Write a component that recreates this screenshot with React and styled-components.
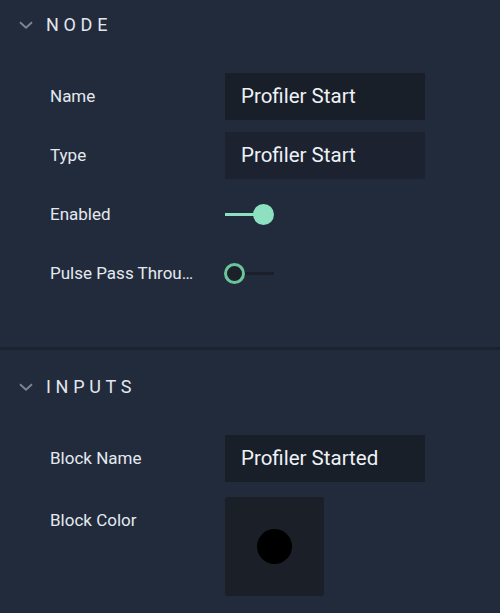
import styled, { createGlobalStyle } from 'styled-components';

const GlobalStyle = createGlobalStyle`
  html, body {
    margin: 0;
    padding: 0;
    background: #222b3b;
    font-family: Roboto, "Liberation Sans", sans-serif;
  }
`;

const Panel = styled.div`
  width: 500px;
  height: 613px;
  background: #222b3b;
  overflow: hidden;
`;

const Section = styled.section`
  padding: ${props => props.first ? '12px' : '24px'} 0 ${props => props.first ? '50px' : '0'};
  border-bottom: ${props => props.first ? '3px solid #1b2230' : 'none'};
`;

const Header = styled.div`
  display: flex;
  align-items: center;
  height: 24px;
  padding-left: 19px;
  margin-bottom: 37px;
`;

const Chevron = styled.svg`
  width: 14px;
  height: 8px;
  margin-right: 13px;
  margin-top: 2px;
`;

const Title = styled.span`
  font-size: 18px;
  letter-spacing: 4.7px;
  color: #e1e7ef;
  text-transform: uppercase;
`;

const Rows = styled.div`
  display: flex;
  flex-direction: column;
  gap: ${props => props.gap || 12}px;
  padding-left: 50px;
`;

const Row = styled.div`
  display: flex;
  align-items: flex-start;
`;

const Label = styled.div`
  width: 150px;
  margin-right: 25px;
  height: 47px;
  line-height: 47px;
  font-size: 17px;
  color: #e4e9f0;
  white-space: nowrap;
  overflow: hidden;
  text-overflow: ellipsis;
`;

const Field = styled.div`
  width: 200px;
  height: 47px;
  box-sizing: border-box;
  padding-left: 16px;
  line-height: 47px;
  font-size: 20.5px;
  color: #eef2f7;
  background: ${props => props.muted ? '#1c2230' : '#191f29'};
`;

const ToggleWrap = styled.div`
  position: relative;
  width: 50px;
  height: 47px;
  display: flex;
  align-items: center;
`;

const Track = styled.div`
  margin-left: ${props => props.on ? '0' : '11px'};
  width: ${props => props.on ? '30px' : '38px'};
  height: 3px;
  background: ${props => props.on ? '#8de0c0' : '#1a1f29'};
`;

const Knob = styled.div`
  position: absolute;
  top: 13px;
  left: ${props => props.on ? '28px' : '-1px'};
  width: 21px;
  height: 21px;
  box-sizing: border-box;
  border-radius: 50%;
  background: ${props => props.on ? '#8de0c0' : '#1b2029'};
  border: ${props => props.on ? 'none' : '3px solid #6cc49c'};
`;

const ColorBox = styled.div`
  width: 99px;
  height: 99px;
  border-radius: 3px;
  background: #1a1f28;
  display: flex;
  align-items: center;
  justify-content: center;
`;

const Swatch = styled.div`
  width: 35px;
  height: 35px;
  border-radius: 50%;
  background: ${props => props.color};
`;

const ChevronIcon = () => (
  <Chevron viewBox="0 0 14 8">
    <path d="M1 1.2 L7 6.6 L13 1.2" fill="none" stroke="#7d8594" strokeWidth="1.9" />
  </Chevron>
);

const Toggle = ({ on }) => (
  <ToggleWrap>
    <Track on={on ? 1 : 0} />
    <Knob on={on ? 1 : 0} />
  </ToggleWrap>
);

export default function App() {
  return (
    <Panel>
      <GlobalStyle />
      <Section first>
        <Header>
          <ChevronIcon />
          <Title>Node</Title>
        </Header>
        <Rows>
          <Row>
            <Label>Name</Label>
            <Field>Profiler Start</Field>
          </Row>
          <Row>
            <Label>Type</Label>
            <Field muted>Profiler Start</Field>
          </Row>
          <Row>
            <Label>Enabled</Label>
            <Toggle on />
          </Row>
          <Row>
            <Label>Pulse Pass Through</Label>
            <Toggle />
          </Row>
        </Rows>
      </Section>
      <Section>
        <Header>
          <ChevronIcon />
          <Title>Inputs</Title>
        </Header>
        <Rows gap={15}>
          <Row>
            <Label>Block Name</Label>
            <Field>Profiler Started</Field>
          </Row>
          <Row>
            <Label>Block Color</Label>
            <ColorBox>
              <Swatch color="#000" />
            </ColorBox>
          </Row>
        </Rows>
      </Section>
    </Panel>
  );
}
